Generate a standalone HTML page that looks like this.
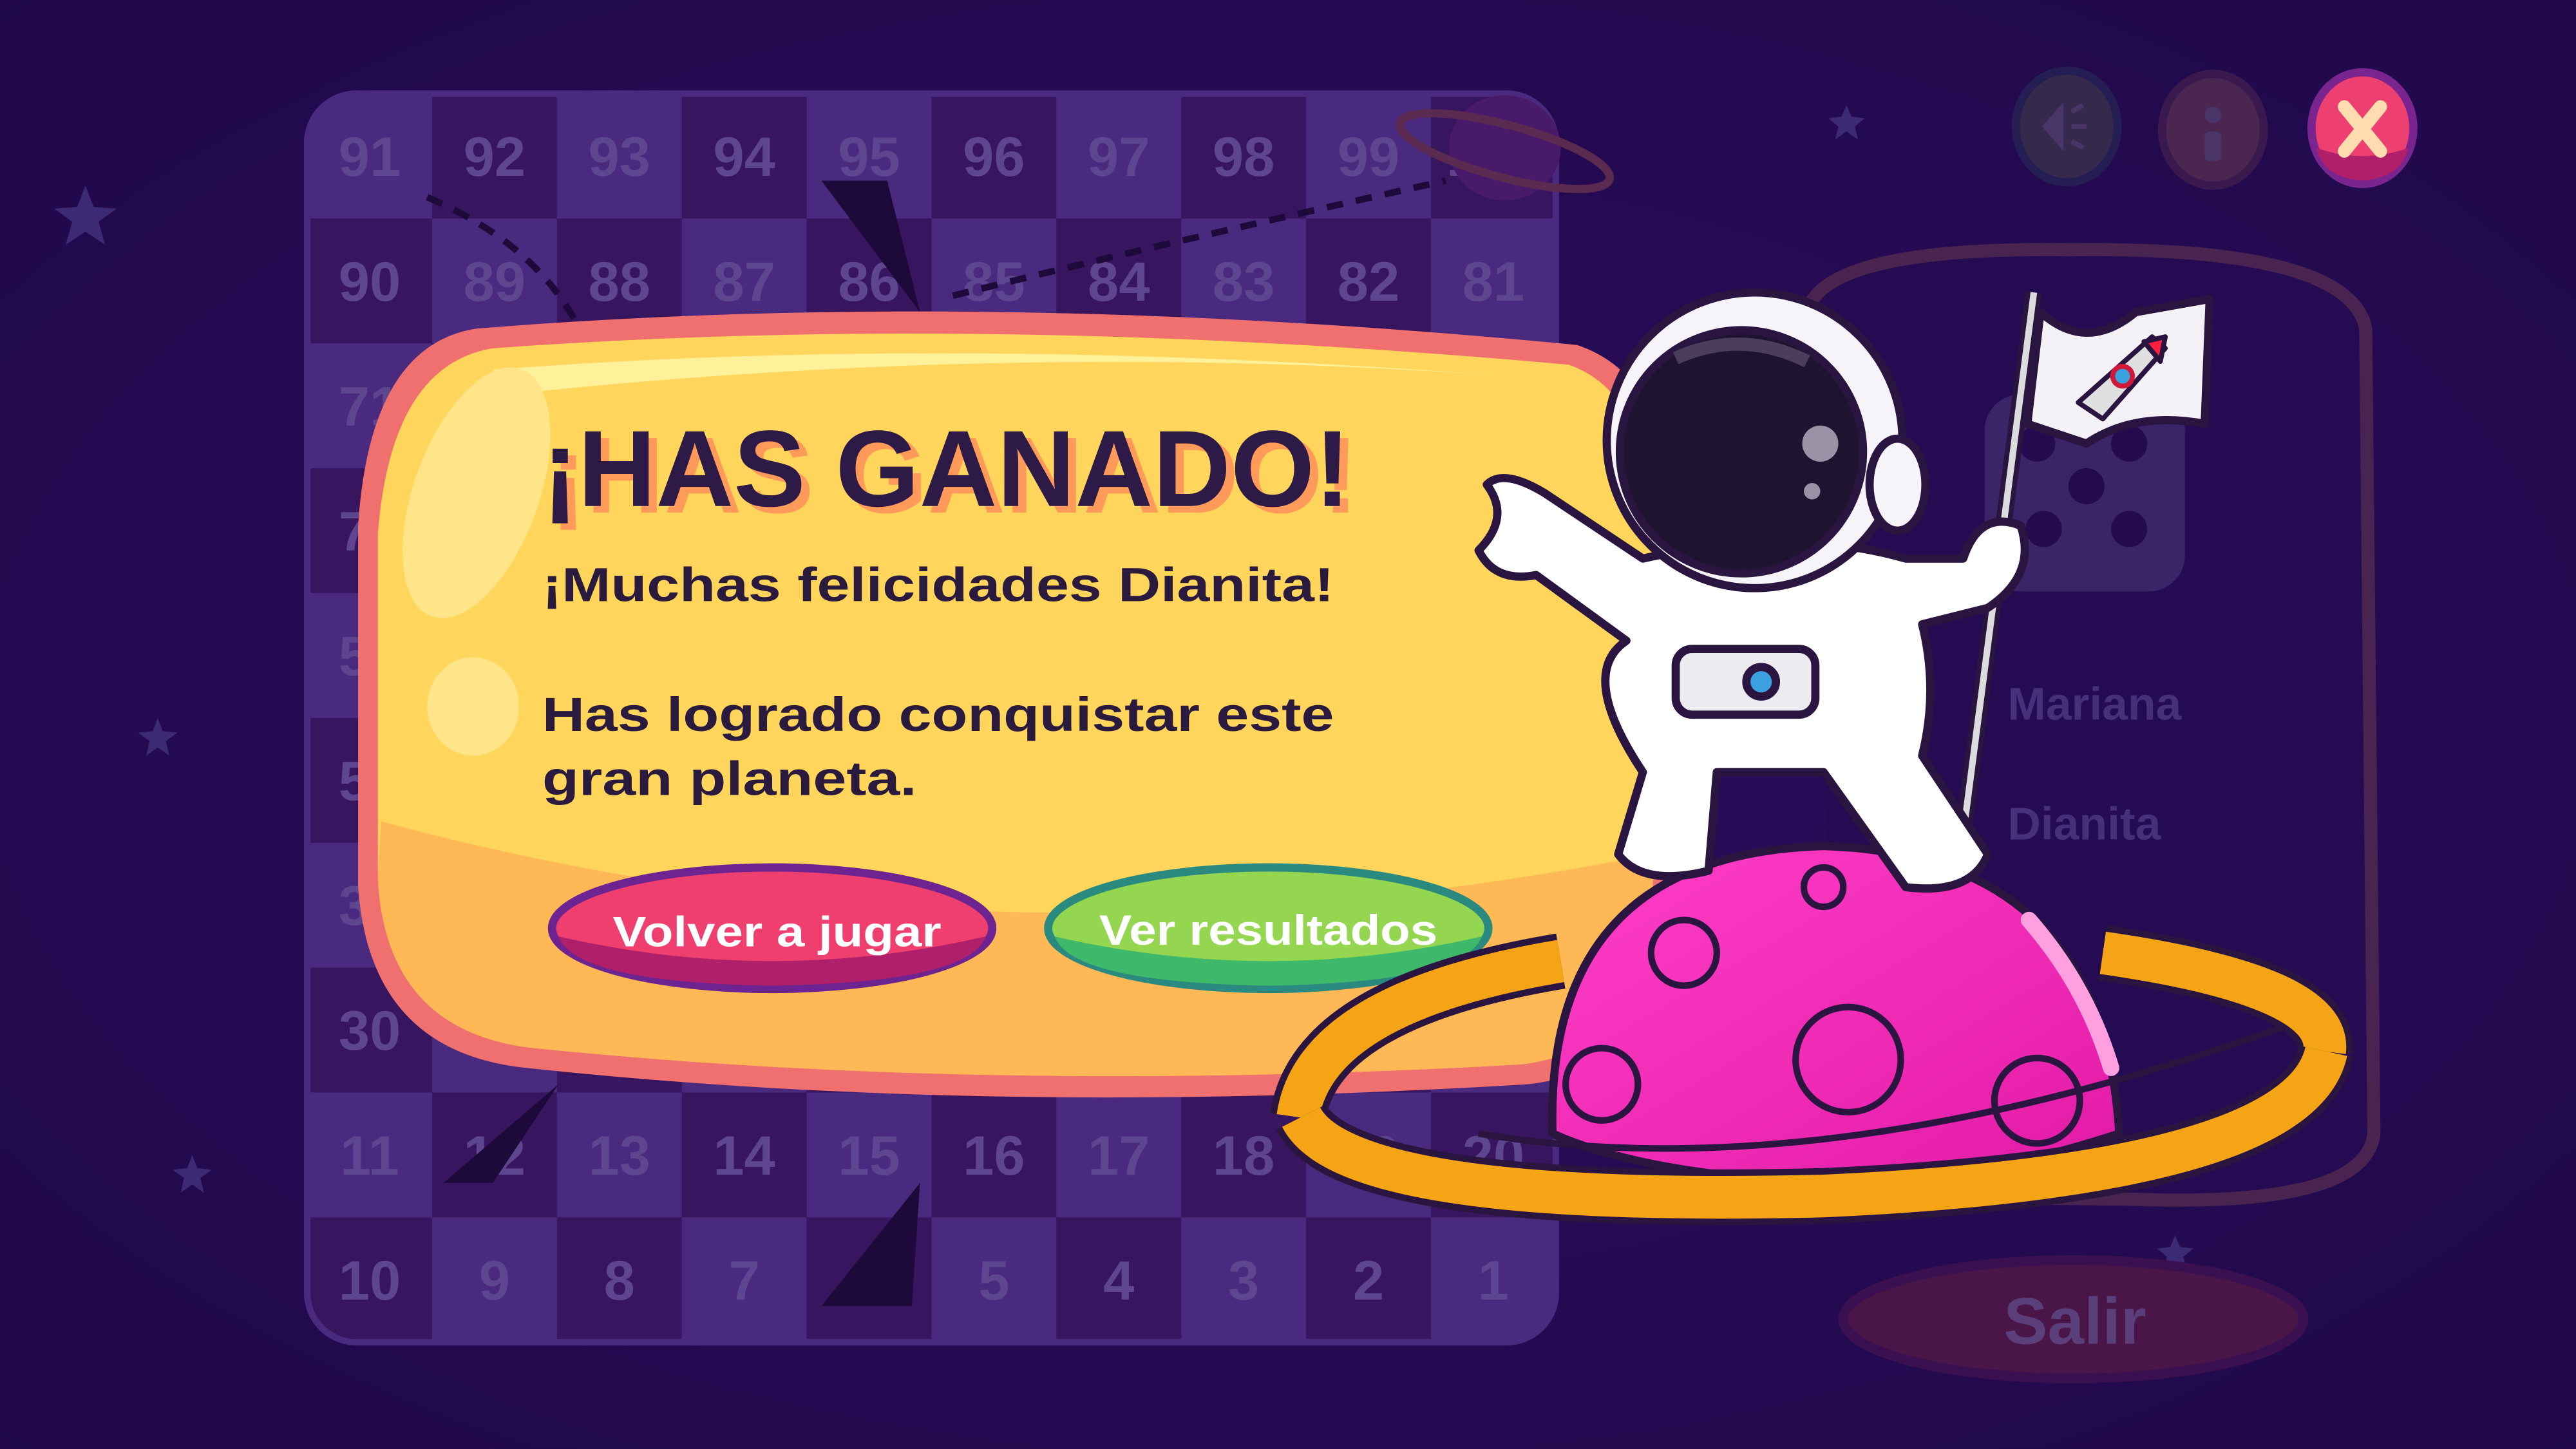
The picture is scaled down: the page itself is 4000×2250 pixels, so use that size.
<!DOCTYPE html>
<html><head><meta charset="utf-8"><style>
html,body{margin:0;padding:0;background:#220a4e;overflow:hidden}
svg{display:block}
text{font-family:"Liberation Sans",sans-serif;font-weight:bold}
</style></head><body>
<svg width="4000" height="2250" viewBox="0 0 1568 882" xmlns="http://www.w3.org/2000/svg">
<defs>
<radialGradient id="bg" cx="0.5" cy="0.5" r="0.8"><stop offset="0" stop-color="#2b0d5c"/><stop offset="1" stop-color="#1f0848"/></radialGradient>
<linearGradient id="pl" x1="0" y1="0" x2="1" y2="1"><stop offset="0" stop-color="#ff3fc8"/><stop offset="1" stop-color="#e21aa6"/></linearGradient>
<pattern id="chk" x="187" y="57" width="152" height="152" patternUnits="userSpaceOnUse">
<rect width="152" height="152" fill="#38155f"/>
<rect width="76" height="76" fill="#4a2a7e"/><rect x="76" y="76" width="76" height="76" fill="#4a2a7e"/>
</pattern>
<clipPath id="bc"><rect x="187" y="57" width="760" height="760" rx="30"/></clipPath>
</defs>
<rect width="1568" height="882" fill="url(#bg)"/>
<g fill="#3d2a74">
<polygon points="52,113 57,126 71,127 60,135 64,149 52,141 40,149 44,135 33,127 47,126"/>
<polygon points="96,437 99,445 108,446 101,451 103,460 96,455 89,460 91,451 84,446 93,445"/>
<polygon points="117,703 120,711 129,712 122,717 124,726 117,721 110,726 112,717 105,712 114,711"/>
<polygon points="1124,64 1127,71 1135,72 1129,77 1131,85 1124,80 1117,85 1119,77 1113,72 1121,71"/>
<polygon points="1324,752 1327,759 1335,760 1329,765 1331,773 1324,768 1317,773 1319,765 1313,760 1321,759"/>
</g>
<!-- board -->
<rect x="187" y="57" width="760" height="760" rx="30" fill="url(#chk)"/>
<g font-size="34" fill="#5e4590" text-anchor="middle" clip-path="url(#bc)">
<text y="107"><tspan x="225">91</tspan><tspan x="301">92</tspan><tspan x="377">93</tspan><tspan x="453">94</tspan><tspan x="529">95</tspan><tspan x="605">96</tspan><tspan x="681">97</tspan><tspan x="757">98</tspan><tspan x="833">99</tspan><tspan x="909">100</tspan></text>
<text y="183"><tspan x="225">90</tspan><tspan x="301">89</tspan><tspan x="377">88</tspan><tspan x="453">87</tspan><tspan x="529">86</tspan><tspan x="605">85</tspan><tspan x="681">84</tspan><tspan x="757">83</tspan><tspan x="833">82</tspan><tspan x="909">81</tspan></text>
<text y="259"><tspan x="225">71</tspan><tspan x="301">72</tspan><tspan x="377">73</tspan><tspan x="453">74</tspan><tspan x="529">75</tspan><tspan x="605">76</tspan><tspan x="681">77</tspan><tspan x="757">78</tspan><tspan x="833">79</tspan><tspan x="909">80</tspan></text>
<text y="335"><tspan x="225">70</tspan><tspan x="301">69</tspan><tspan x="377">68</tspan><tspan x="453">67</tspan><tspan x="529">66</tspan><tspan x="605">65</tspan><tspan x="681">64</tspan><tspan x="757">63</tspan><tspan x="833">62</tspan><tspan x="909">61</tspan></text>
<text y="411"><tspan x="225">51</tspan><tspan x="301">52</tspan><tspan x="377">53</tspan><tspan x="453">54</tspan><tspan x="529">55</tspan><tspan x="605">56</tspan><tspan x="681">57</tspan><tspan x="757">58</tspan><tspan x="833">59</tspan><tspan x="909">60</tspan></text>
<text y="487"><tspan x="225">50</tspan><tspan x="301">49</tspan><tspan x="377">48</tspan><tspan x="453">47</tspan><tspan x="529">46</tspan><tspan x="605">45</tspan><tspan x="681">44</tspan><tspan x="757">43</tspan><tspan x="833">42</tspan><tspan x="909">41</tspan></text>
<text y="563"><tspan x="225">31</tspan><tspan x="301">32</tspan><tspan x="377">33</tspan><tspan x="453">34</tspan><tspan x="529">35</tspan><tspan x="605">36</tspan><tspan x="681">37</tspan><tspan x="757">38</tspan><tspan x="833">39</tspan><tspan x="909">40</tspan></text>
<text y="639"><tspan x="225">30</tspan><tspan x="301">29</tspan><tspan x="377">28</tspan><tspan x="453">27</tspan><tspan x="529">26</tspan><tspan x="605">25</tspan><tspan x="681">24</tspan><tspan x="757">23</tspan><tspan x="833">22</tspan><tspan x="909">21</tspan></text>
<text y="715"><tspan x="225">11</tspan><tspan x="301">12</tspan><tspan x="377">13</tspan><tspan x="453">14</tspan><tspan x="529">15</tspan><tspan x="605">16</tspan><tspan x="681">17</tspan><tspan x="757">18</tspan><tspan x="833">19</tspan><tspan x="909">20</tspan></text>
<text y="791"><tspan x="225">10</tspan><tspan x="301">9</tspan><tspan x="377">8</tspan><tspan x="453">7</tspan><tspan x="529">6</tspan><tspan x="605">5</tspan><tspan x="681">4</tspan><tspan x="757">3</tspan><tspan x="833">2</tspan><tspan x="909">1</tspan></text>
</g>
<rect x="187" y="57" width="760" height="760" rx="30" fill="none" stroke="#4a2a7e" stroke-width="4"/>
<!-- board decorations -->
<path d="M260 120 Q330 150 355 205" stroke="#1e0a3a" stroke-width="4" stroke-dasharray="10 8" fill="none"/>
<path d="M580 180 Q700 150 880 110" stroke="#1e0a3a" stroke-width="4" stroke-dasharray="10 8" fill="none"/>
<ellipse cx="916" cy="90" rx="34" ry="32" fill="#4a1a6a"/>
<ellipse cx="916" cy="92" rx="66" ry="16" fill="none" stroke="#5a2a50" stroke-width="5" transform="rotate(15 916 92)"/>
<path d="M500 110 L560 190 L540 110 Z" fill="#1e0a3a"/>
<path d="M270 720 L340 660 L300 720 Z" fill="#1e0a3a"/>
<path d="M500 795 L560 720 L555 795 Z" fill="#1e0a3a"/>
<!-- right panel -->
<path d="M1100 190 Q1110 150 1260 152 Q1430 150 1440 200 L1445 690 Q1440 735 1300 730 L1120 728" fill="#250b52" stroke="#4a2450" stroke-width="8"/>
<rect x="1208" y="240" width="122" height="120" rx="22" fill="#3c2468"/>
<g fill="#240a4e"><circle cx="1240" cy="270" r="11"/><circle cx="1270" cy="296" r="11"/><circle cx="1296" cy="322" r="11"/><circle cx="1296" cy="270" r="11"/><circle cx="1244" cy="322" r="11"/></g>
<text x="1222" y="438" font-size="28" fill="#46307a">Mariana</text>
<text x="1222" y="511" font-size="28" fill="#46307a">Dianita</text>
<ellipse cx="1262" cy="803" rx="140" ry="36" fill="#4a1648" stroke="#3a1050" stroke-width="6"/>
<text x="1263" y="818" font-size="40" fill="#5a3f7a" text-anchor="middle">Salir</text>
<!-- top buttons -->
<ellipse cx="1258" cy="77" rx="31" ry="34" fill="#362a4c" stroke="#241e54" stroke-width="5"/>
<path d="M1243 77 L1256 62 L1256 92 Z" fill="#4a3568"/>
<path d="M1261 68 L1268 64 M1261 77 L1270 77 M1261 86 L1268 90" stroke="#4a3568" stroke-width="3"/>
<ellipse cx="1347" cy="79" rx="31" ry="34" fill="#4a2650" stroke="#3a1a4e" stroke-width="5"/>
<rect x="1342" y="80" width="10" height="18" rx="3" fill="#4a3568"/><circle cx="1347" cy="70" r="5" fill="#4a3568"/>
<ellipse cx="1438" cy="78" rx="31" ry="34" fill="#ee4070" stroke="#7a2490" stroke-width="5"/>
<path d="M1410 90 Q1438 100 1466 90 Q1462 108 1438 110 Q1414 108 1410 90Z" fill="#b0206a"/>
<path d="M1427 65 L1449 92 M1449 65 L1427 92" stroke="#ffdcb0" stroke-width="8" stroke-linecap="round"/>
<!-- dialog -->
<path d="M290 200 Q600 175 960 210 Q1020 230 1020 330 L1020 560 Q1015 650 930 660 Q600 680 320 650 Q225 640 218 540 L218 320 Q225 210 290 200 Z" fill="#f07070"/>
<path d="M300 212 Q600 190 955 222 Q1006 240 1006 330 L1006 555 Q1000 640 925 648 Q600 666 325 638 Q235 628 230 535 L230 325 Q238 222 300 212 Z" fill="#ffd55c"/>
<path d="M232 500 Q600 600 1006 520 L1006 555 Q1000 640 925 648 Q600 666 325 638 Q235 628 230 535 Z" fill="#ffb856"/>
<path d="M300 225 Q600 202 955 232 Q640 205 310 240 Z" fill="#fff09a"/>
<ellipse cx="290" cy="300" rx="38" ry="80" fill="#ffe488" transform="rotate(20 290 300)"/>
<ellipse cx="288" cy="430" rx="28" ry="30" fill="#ffe488"/>
<text x="335" y="312" font-size="66" fill="#ff9a5a" textLength="492" lengthAdjust="spacingAndGlyphs">¡HAS GANADO!</text>
<text x="330" y="308" font-size="66" fill="#2e1a47" textLength="492" lengthAdjust="spacingAndGlyphs">¡HAS GANADO!</text>
<text x="330" y="366" font-size="29" fill="#2a1a3e" textLength="482" lengthAdjust="spacingAndGlyphs">¡Muchas felicidades Dianita!</text>
<text x="330" y="445" font-size="29" fill="#2a1a3e" textLength="482" lengthAdjust="spacingAndGlyphs">Has logrado conquistar este</text>
<text x="330" y="484" font-size="29" fill="#2a1a3e" textLength="228" lengthAdjust="spacingAndGlyphs">gran planeta.</text>
<ellipse cx="470" cy="565" rx="134" ry="37" fill="#ee3f6e" stroke="#6e2490" stroke-width="5"/>
<path d="M340 570 Q470 600 600 570 Q590 598 470 600 Q350 598 340 570Z" fill="#b01f6a"/>
<text x="473" y="576" font-size="26" fill="#fff" text-anchor="middle" textLength="200" lengthAdjust="spacingAndGlyphs">Volver a jugar</text>
<ellipse cx="772" cy="565" rx="134" ry="37" fill="#94d650" stroke="#2a8a80" stroke-width="5"/>
<path d="M642 570 Q772 600 902 570 Q892 598 772 600 Q652 598 642 570Z" fill="#3eb86a"/>
<text x="772" y="575" font-size="26" fill="#fff" text-anchor="middle" textLength="206" lengthAdjust="spacingAndGlyphs">Ver resultados</text>
<!-- planet & ring -->
<path d="M790 680 Q800 610 950 585" fill="none" stroke="#2a1440" stroke-width="34"/>
<path d="M1280 580 Q1420 600 1415 640" fill="none" stroke="#2a1440" stroke-width="34"/>
<path d="M790 680 Q800 610 950 585" fill="none" stroke="#f4a414" stroke-width="26"/>
<path d="M1280 580 Q1420 600 1415 640" fill="none" stroke="#f4a414" stroke-width="26"/>
<path d="M945 690 Q940 520 1110 515 Q1280 520 1290 690 Q1200 720 1110 720 Q1000 715 945 690Z" fill="url(#pl)" stroke="#2a1440" stroke-width="5"/>
<g fill="none" stroke="#2a1440" stroke-width="4"><circle cx="1025" cy="580" r="20"/><circle cx="1125" cy="645" r="32"/><circle cx="975" cy="660" r="22"/><circle cx="1240" cy="670" r="26"/><circle cx="1110" cy="540" r="12"/></g>
<path d="M1235 560 Q1270 600 1285 650" stroke="#ff9fe0" stroke-width="10" fill="none" stroke-linecap="round"/>
<path d="M792 680 Q820 735 1110 728 Q1400 715 1416 640" fill="none" stroke="#2a1440" stroke-width="34"/>
<path d="M792 680 Q820 735 1110 728 Q1400 715 1416 640" fill="none" stroke="#f4a414" stroke-width="26"/>
<path d="M900 690 Q1110 725 1390 625" fill="none" stroke="#2a1440" stroke-width="4"/>
<!-- astronaut -->
<g stroke="#2a1440" stroke-width="5" stroke-linejoin="round">
<line x1="1238" y1="178" x2="1196" y2="500" stroke-width="10"/>
<line x1="1238" y1="178" x2="1196" y2="500" stroke="#dcdcdc" stroke-width="4"/>
<path d="M1242 190 Q1270 215 1300 190 L1345 182 L1342 258 Q1300 250 1270 270 L1234 258 Z" fill="#f4f2f6"/>
<path d="M1265 245 L1310 205 L1318 212 L1280 255 Z" fill="#e0e0e0" stroke-width="3"/>
<path d="M1305 208 L1318 205 L1315 220Z" fill="#ff2040" stroke-width="3"/>
<circle cx="1292" cy="229" r="6" fill="#3aa0e0" stroke="#d01838" stroke-width="3"/>
<path d="M990 390 Q960 410 1000 470 L985 520 Q1000 540 1040 530 L1045 470 L1110 470 L1160 540 Q1200 545 1210 520 L1170 460 Q1180 420 1170 380 L1210 370 Q1240 350 1230 320 Q1205 310 1195 340 L1160 340 Q1090 320 1000 340 L940 300 Q915 285 905 295 Q920 315 900 335 Q910 355 935 350 Z" fill="#ffffff"/>
<rect x="1020" y="395" width="85" height="40" rx="10" fill="#ececf0"/>
<circle cx="1072" cy="415" r="9" fill="#3aa0e0"/>
<circle cx="1068" cy="268" r="90" fill="#f6f4f8"/>
<circle cx="1060" cy="275" r="74" fill="#1e1430"/>
<ellipse cx="1155" cy="295" rx="17" ry="28" fill="#f6f4f8"/>
</g>
<circle cx="1108" cy="270" r="11" fill="#9a92a6"/><circle cx="1103" cy="299" r="5" fill="#9a92a6"/>
<path d="M1020 218 Q1060 200 1100 220" stroke="#4a3e5c" stroke-width="8" fill="none"/>
</svg>
</body></html>
